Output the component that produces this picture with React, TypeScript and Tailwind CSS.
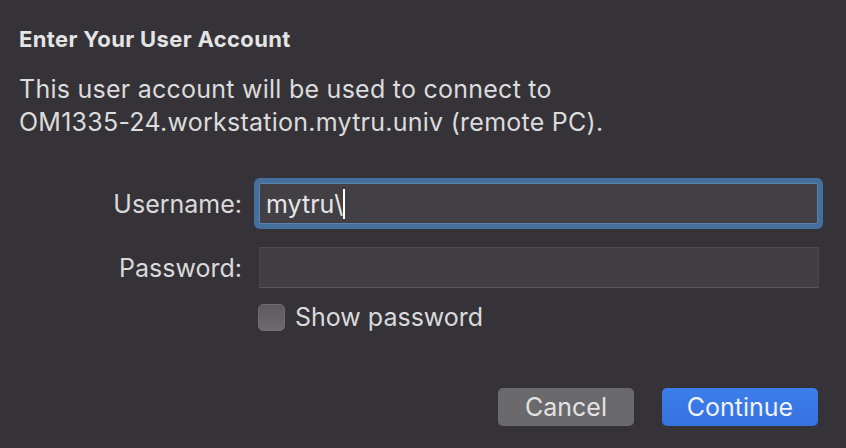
import React from "react";

export default function App() {
  const font = { fontFamily: 'Inter, "Liberation Sans", Arial, sans-serif' };
  return (
    <div
      className="w-[846px] h-[448px] bg-[#353337] text-[#dedddf] overflow-hidden flex flex-col"
      style={font}
    >
      <div className="pl-[19px] pt-[25px]">
        <div className="text-[22px] leading-[28px] font-bold tracking-[0.35px] text-[#e4e3e5]">
          Enter Your User Account
        </div>
        <div className="mt-[20px] text-[25px] leading-[33px] tracking-[0.25px] text-[#dcdbdd]">
          <div>This user account will be used to connect to</div>
          <div>OM1335-24.workstation.mytru.univ (remote PC).</div>
        </div>
      </div>

      <div className="mt-[44px] flex flex-col">
        <div className="flex items-center">
          <div className="w-[242px] text-right text-[25px] leading-[30px] text-[#dad9db]">
            Username:
          </div>
          <div className="ml-[17px] w-[559px] h-[41px] bg-[#424044] border border-[#5b82ad] shadow-[0_0_0_5px_#45709d] rounded-[2px] flex items-center pl-[6px]">
            <span className="text-[25px] leading-[30px] text-[#e6e5e7]">mytru\</span>
            <span className="w-[2px] h-[30px] bg-white" />
          </div>
        </div>

        <div className="mt-[23px] flex items-center">
          <div className="w-[242px] text-right text-[25px] leading-[30px] text-[#dad9db]">
            Password:
          </div>
          <div className="ml-[17px] w-[560px] h-[41px] bg-[#413f43] border-t border-t-[#4e4c50] border-b border-b-[#5a585c] border-x border-x-[#49474b]" />
        </div>

        <div className="mt-[14px] flex items-center pl-[258px]">
          <div className="w-[27px] h-[27px] rounded-[5px] bg-gradient-to-b from-[#5c5a5e] to-[#6c6a6e] border border-[#6e6c70]" />
          <div className="ml-[10px] text-[25px] leading-[30px] text-[#dad9db]">
            Show password
          </div>
        </div>
      </div>

      <div className="mt-[56px] flex justify-end pr-[28px] gap-[28px]">
        <div className="w-[136px] h-[38px] rounded-[5px] bg-[#6a696b] flex items-center justify-center text-[25px] leading-[30px] text-[#e3e2e4]">
          Cancel
        </div>
        <div className="w-[156px] h-[38px] rounded-[5px] bg-gradient-to-b from-[#3c7eeb] to-[#3672e0] flex items-center justify-center text-[25px] leading-[30px] text-[#eef2fb]">
          Continue
        </div>
      </div>
    </div>
  );
}
